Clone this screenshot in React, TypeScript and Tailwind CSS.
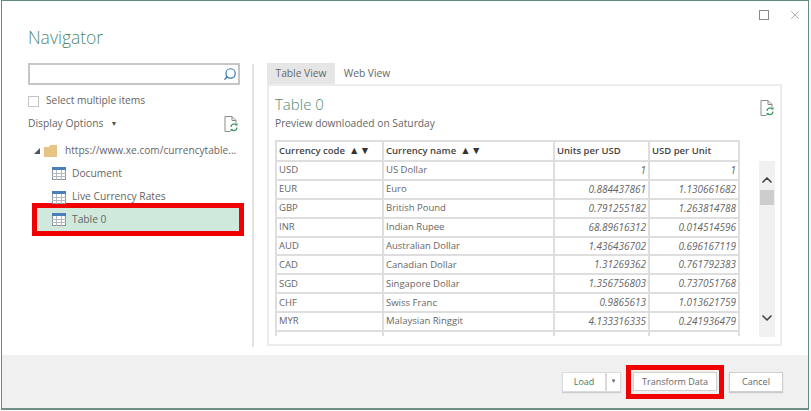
import React from 'react';
import { ChevronDown, ChevronUp, Search, X } from 'lucide-react';

const rows = [
  ['USD', 'US Dollar', '1', '1'],
  ['EUR', 'Euro', '0.884437861', '1.130661682'],
  ['GBP', 'British Pound', '0.791255182', '1.263814788'],
  ['INR', 'Indian Rupee', '68.89616312', '0.014514596'],
  ['AUD', 'Australian Dollar', '1.436436702', '0.696167119'],
  ['CAD', 'Canadian Dollar', '1.31269362', '0.761792383'],
  ['SGD', 'Singapore Dollar', '1.356756803', '0.737051768'],
  ['CHF', 'Swiss Franc', '0.9865613', '1.013621759'],
  ['MYR', 'Malaysian Ringgit', '4.133316335', '0.241936479'],
];

function TableIcon() {
  return (
    <svg width="14" height="13" viewBox="0 0 14 13" className="shrink-0">
      <rect x="0.5" y="0.5" width="13" height="12" fill="#fff" stroke="#8a9199" />
      <rect x="0" y="0" width="14" height="3" fill="#4a80b5" />
      <path d="M0 6.5H14M0 9.5H14M4.5 3V13M9.5 3V13" stroke="#b4b9be" strokeWidth="1" />
    </svg>
  );
}

function RefreshDoc() {
  return (
    <svg width="14" height="16" viewBox="0 0 14 16">
      <path d="M1 .5H8L12 4.5V7M1 .5V15.5H6" fill="none" stroke="#8b8b8b" />
      <path d="M8 .5V4.5H12" fill="none" stroke="#8b8b8b" />
      <path d="M7 11a3.2 3.2 0 0 1 5.6-2M13 11.5a3.2 3.2 0 0 1-5.6 2" fill="none" stroke="#3f9a68" strokeWidth="1.4" />
      <path d="M13.5 6.8V9.6H10.8ZM6.5 15.6V12.9H9.2Z" fill="#3f9a68" />
    </svg>
  );
}

function SortArrows() {
  return <span className="ml-[4px] text-[10.5px] leading-none tracking-[0.5px] text-[#333]">▲▼</span>;
}

export default function App() {
  return (
    <div className="h-[411px] w-[811px] overflow-hidden bg-white pb-[1px] pl-[1px] pr-[2px] text-[#666] [font-family:'Open_Sans',sans-serif]">
      <div className="flex h-full flex-col border border-b-2 border-[#5d8f79] border-b-[#6f8f82]">
        <div className="flex h-[27px] shrink-0 items-center justify-end gap-[19px] pr-[6px] pt-[1px]">
          <div className="h-[10px] w-[10px] border border-[#8a8a8a]" />
          <X size={14} strokeWidth={1} className="text-[#777]" />
        </div>

        <div className="flex min-h-0 flex-1">
          <div className="w-[226px] shrink-0 pl-[26px]">
            <h1 className="h-[35px] text-[17.5px] font-light leading-[18px] text-[#4f8a70]">Navigator</h1>
            <div className="flex h-[22px] w-[212px] items-center justify-end border-2 border-[#c6c6c6] pr-[1px]">
              <Search size={14} strokeWidth={2} className="-scale-x-100 text-[#2f72b5]" />
            </div>
            <label className="mt-[9px] flex h-[14px] items-center gap-[7px] text-[10.25px]">
              <span className="h-[11px] w-[11px] border border-[#c4c4c4]" />
              Select multiple items
            </label>
            <div className="mt-[7px] flex h-[18px] w-[210px] items-center justify-between text-[10.3px]">
              <span className="flex items-center">
                Display Options
                <span className="ml-[7px] text-[7px] text-[#555]">▼</span>
              </span>
              <RefreshDoc />
            </div>
            <div className="mt-[7px] flex h-[22px] items-center pl-[6px]">
              <span className="h-0 w-0 border-b-[6px] border-l-[6px] border-b-[#555] border-l-transparent" />
              <svg width="14" height="12" viewBox="0 0 14 12" className="ml-[4px] shrink-0">
                <path d="M0 2H5L6 0H13V12H0Z" fill="#e6c486" />
              </svg>
              <span className="ml-[7px] whitespace-nowrap text-[10.15px]">https://www.xe.com/currencytable...</span>
            </div>
            <div className="flex h-[23px] items-center gap-[6px] pl-[24px] text-[10.25px]">
              <TableIcon />
              Document
            </div>
            <div className="mt-[1px] flex h-[22px] items-center gap-[6px] pl-[24px] text-[10.25px]">
              <TableIcon />
              Live Currency Rates
            </div>
            <div className="-mt-[5px] ml-[4px] flex h-[33px] w-[212px] items-center gap-[6px] border-[5px] border-[#f00000] bg-[#cfe9dc] pl-[15px] text-[10.25px]">
              <TableIcon />
              Table 0
            </div>
          </div>

          <div className="mb-[8px] ml-[24px] mt-[36px] w-[2px] shrink-0 bg-[#e3e3e3]" />

          <div className="ml-[13px] flex w-[515px] flex-col pt-[35px]">
            <div className="flex h-[21px] text-[10.25px]">
              <div className="flex w-[68px] items-center justify-center bg-[#e6e6e6]">Table View</div>
              <div className="flex w-[64px] items-center justify-center">Web View</div>
            </div>
            <div className="flex h-[262px] flex-col border-2 border-[#ececec] pl-[6px]">
              <div className="flex h-[54px] justify-between pr-[6px]">
                <div>
                  <h2 className="pt-[8px] text-[15px] font-light leading-[20px] text-[#4f8a70]">Table 0</h2>
                  <p className="mt-[2px] text-[10.25px] leading-[15px]">Preview downloaded on Saturday</p>
                </div>
                <div className="pt-[14px]">
                  <RefreshDoc />
                </div>
              </div>
              <div className="flex">
                <div className="relative h-[196px] w-[465px] overflow-hidden">
                  <table className="w-[465px] table-fixed border-collapse text-[9.5px]">
                    <thead>
                      <tr className="h-[20px] text-[#444]">
                        <th className="w-[107px] border-2 border-[#dedede] px-[2px] text-left font-semibold">
                          Currency code
                          <SortArrows />
                        </th>
                        <th className="w-[171px] border-2 border-[#dedede] px-[2px] text-left font-semibold">
                          Currency name
                          <SortArrows />
                        </th>
                        <th className="w-[95px] border-2 border-[#dedede] px-[2px] text-left font-semibold">Units per USD</th>
                        <th className="border-2 border-[#dedede] px-[2px] text-left font-semibold">USD per Unit</th>
                      </tr>
                    </thead>
                    <tbody>
                      {rows.map((r) => (
                        <tr key={r[0]} className="h-[18.9px]">
                          <td className="border-2 border-[#dedede] px-[2px]">{r[0]}</td>
                          <td className="border-2 border-[#dedede] px-[2px]">{r[1]}</td>
                          <td className="border-2 border-[#dedede] px-[2px] text-right text-[10px] italic">{r[2]}</td>
                          <td className="border-2 border-[#dedede] px-[2px] text-right text-[10px] italic">{r[3]}</td>
                        </tr>
                      ))}
                      <tr className="h-[18.9px]">
                        <td className="border-x-2 border-t-2 border-[#dedede]" />
                        <td className="border-x-2 border-t-2 border-[#dedede]" />
                        <td className="border-x-2 border-t-2 border-[#dedede]" />
                        <td className="border-x-2 border-t-2 border-[#dedede]" />
                      </tr>
                    </tbody>
                  </table>
                </div>
                <div className="ml-[19px] mt-[21px] flex h-[176px] w-[16px] flex-col items-center bg-[#f1f1f1]">
                  <ChevronUp size={16} strokeWidth={2.5} className="mt-[11px] text-[#444]" />
                  <div className="mt-[2px] h-[15px] w-[14px] bg-[#cdcdcd]" />
                  <div className="flex-1" />
                  <ChevronDown size={16} strokeWidth={2.5} className="mb-[11px] text-[#444]" />
                </div>
              </div>
            </div>
          </div>
        </div>

        <div className="flex h-[53px] shrink-0 items-center justify-end bg-[#f0f0f0] pr-[25px] text-[9px]">
          <div className="flex h-[20px] w-[44px] items-center justify-center border border-[#dcdcdc] bg-white text-[#3f7d62] shadow-[0_1px_1px_#ccc]">Load</div>
          <div className="flex h-[20px] w-[15px] items-center justify-center border border-[#dcdcdc] bg-white text-[6px] shadow-[0_1px_1px_#ccc]">▼</div>
          <div className="ml-[5px] flex h-[34px] w-[98px] items-center justify-center border-[5px] border-[#f00000] bg-[#f0f0f0]">
            <div className="flex h-[19px] w-[84px] items-center justify-center border border-[#cfcfcf] bg-white">Transform Data</div>
          </div>
          <div className="ml-[5px] flex h-[20px] w-[54px] items-center justify-center border border-[#cfcfcf] bg-white shadow-[0_1px_1px_#ccc]">Cancel</div>
        </div>
      </div>
    </div>
  );
}
